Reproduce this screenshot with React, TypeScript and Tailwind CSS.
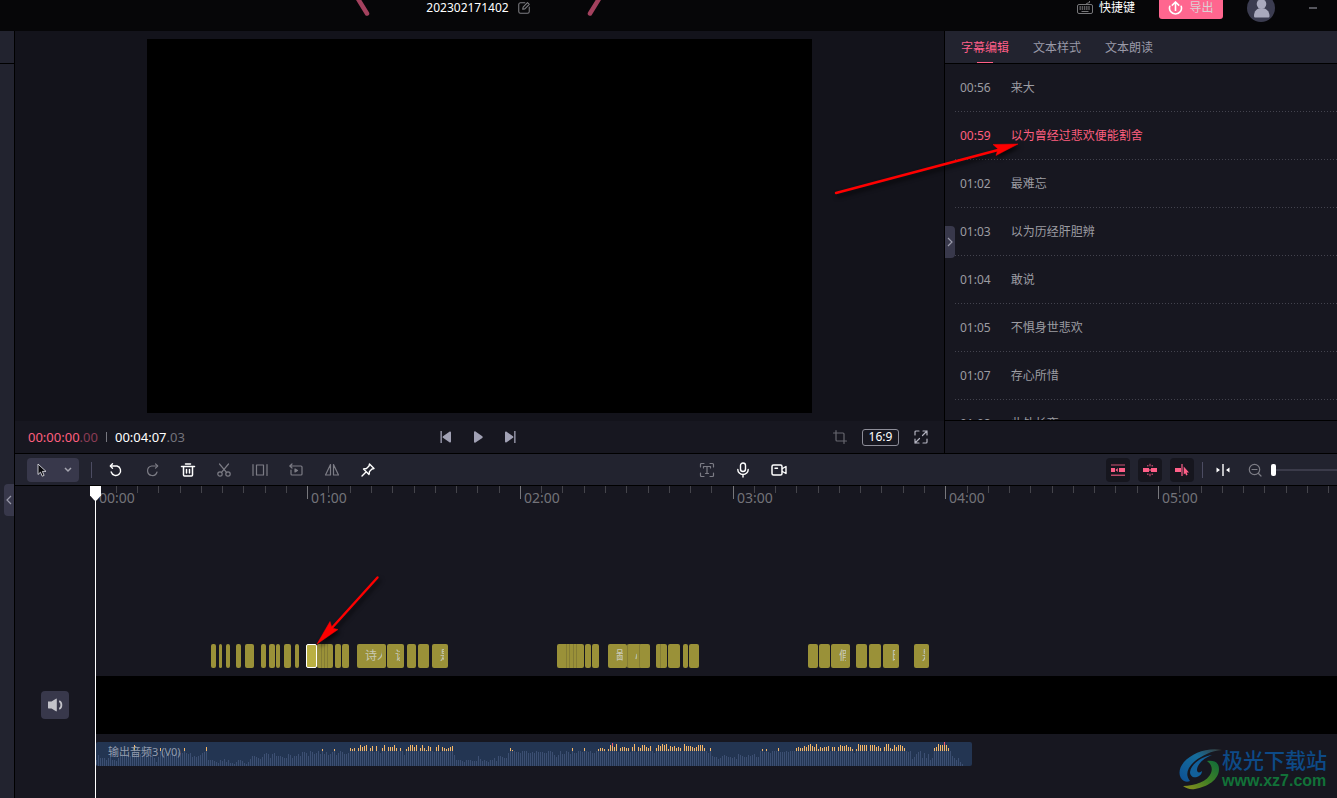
import { useState, type ReactNode } from "react";

interface Caption {
  time: string;
  text: string;
}

interface Clip {
  start: number;
  width: number;
  label?: string;
  selected?: boolean;
  seams?: number[];
}

const CAPTIONS: Caption[] = [
  { time: "00:56", text: "来大" },
  { time: "00:59", text: "以为曾经过悲欢便能割舍" },
  { time: "01:02", text: "最难忘" },
  { time: "01:03", text: "以为历经肝胆辨" },
  { time: "01:04", text: "敢说" },
  { time: "01:05", text: "不惧身世悲欢" },
  { time: "01:07", text: "存心所惜" },
  { time: "01:08", text: "此处长夜" },
];

const TABS = ["字幕编辑", "文本样式", "文本朗读"];

const MINUTE_WIDTH = 212.7;

// start and width in timeline pixels, counted from 00:00
const CLIPS: Clip[] = [
  { start: 116, width: 5 },
  { start: 124, width: 3 },
  { start: 131, width: 4 },
  { start: 141, width: 5 },
  { start: 150, width: 9 },
  { start: 166, width: 5 },
  { start: 174, width: 6 },
  { start: 181, width: 4 },
  { start: 189, width: 7 },
  { start: 200, width: 4 },
  { start: 211, width: 11, selected: true },
  { start: 222, width: 16, seams: [4, 7, 10] },
  { start: 240, width: 6 },
  { start: 247, width: 7 },
  { start: 262, width: 29, label: "诗人" },
  { start: 292, width: 17, label: "该" },
  { start: 312, width: 9 },
  { start: 323, width: 11 },
  { start: 337, width: 16, label: "是" },
  { start: 462, width: 27, seams: [9, 12, 16, 19] },
  { start: 490, width: 6 },
  { start: 497, width: 7 },
  { start: 513, width: 19, label: "鄙" },
  { start: 532, width: 14, label: "心", seams: [0] },
  { start: 544, width: 11, seams: [0] },
  { start: 561, width: 11, seams: [4] },
  { start: 573, width: 12 },
  { start: 588, width: 5 },
  { start: 594, width: 10 },
  { start: 713, width: 10 },
  { start: 724, width: 11 },
  { start: 736, width: 19, label: "假" },
  { start: 761, width: 11 },
  { start: 774, width: 12 },
  { start: 788, width: 16, label: "日" },
  { start: 819, width: 15, label: "是" },
];

// [first sample, heights], one sample every two pixels
const WAVE: [number, number[]][] = [
  [0, [6, 11, 8, 8, 8, 6, 8, 9, 6, 6, 5, 8, 11, 12, 10, 12, 11, 10, 12, 21, 13, 11, 12, 10, 13, 14, 12, 11]],
  [28, [10, 8, 4, 9, 18, 12, 14, 11, 10, 12, 13, 11, 13, 14, 13, 13, 18, 13, 12, 13, 9, 10, 9, 10, 11, 13, 14, 19]],
  [56, [6, 6, 6, 5, 4, 3, 6, 5, 7, 4, 6, 3, 3, 2, 4, 6, 6, 5, 3, 2, 4, 7]],
  [78, [10, 10, 9, 8, 7, 9, 12, 13, 12, 8, 12, 13, 10, 10, 10, 9, 8, 8, 12, 11, 8, 10, 10, 12, 10, 14, 14, 13]],
  [106, [10, 15, 14, 12, 13, 15, 12, 17, 12, 14, 11, 12, 14, 17, 11, 13, 15, 14, 12, 12, 13]],
  [127, [18, 17, 18, 15, 18, 21, 19, 20, 21, 15, 18, 20, 14, 20, 15, 13, 18, 21, 15, 19, 19, 19, 21, 18, 15]],
  [152, [18, 15, 11, 17, 19, 21, 21, 19, 21, 15, 18, 21, 18, 16, 20, 19, 15, 14, 19, 21, 14, 19, 18, 17, 18, 19, 20]],
  [178, [20, 11, 6, 6, 6, 5, 4, 6, 6, 6, 5, 5, 5, 10]],
  [192, [7, 5, 6, 5, 4, 6, 6, 8, 5, 10, 10, 9, 8, 8, 13]],
  [207, [18, 16, 15, 14, 14, 13, 15, 15, 15, 13, 13, 14, 13, 15, 14, 14, 14, 13, 13, 15, 15, 14, 11, 9, 11, 15]],
  [233, [12, 12, 15, 14, 12, 18, 13, 13, 15, 15, 14, 18, 15, 14, 15, 13, 13, 15]],
  [251, [17, 18, 18, 17, 14, 17, 21, 23, 19, 22, 14, 18, 19, 19, 18, 18, 14, 19]],
  [269, [22, 14, 19, 18, 21, 21, 19, 18, 20, 15, 13, 18, 21, 20, 22, 21, 22]],
  [286, [17, 20, 19, 20, 18, 19, 18, 15, 22, 20, 20, 20, 19, 18, 19, 21, 21, 21, 18, 15, 13]],
  [307, [18, 10, 9, 9, 7, 8, 10, 11, 10, 9, 9, 8, 9, 7, 12, 11, 10, 9, 9, 11, 10, 11, 12, 9, 9]],
  [332, [15, 17, 14, 17, 14, 13, 15, 15, 15, 18, 14, 14, 14, 15, 14, 15, 15, 15]],
  [350, [18, 19, 18, 18, 20, 19, 21, 22, 20, 19, 22, 17, 19, 18, 19, 19, 20, 15, 19, 19, 15, 19]],
  [372, [21, 20, 20, 21, 19, 19, 17, 13, 17, 22, 21, 21, 21, 21, 15, 21, 21, 21, 19, 20, 18, 14]],
  [394, [19, 22, 22, 18, 17, 21, 19, 21, 21, 20, 18, 15, 14, 15, 7, 9, 12, 14, 15, 8, 13, 8, 12, 6, 8]],
  [419, [18, 19, 22, 21, 21, 24, 21, 18, 15, 10, 8, 6, 8, 4, 2]],
];

function Waveform() {
  return (
    <svg className="block" width="876" height="24" shapeRendering="crispEdges" aria-hidden>
      {WAVE.map(([first, heights]) =>
        heights.map((h, n) => {
          const x = (first + n) * 2;
          return (
            <g key={x}>
              <rect x={x} y={24 - Math.min(h, 15)} width="1" height={Math.min(h, 15)} fill="#3c4f72" />
              {h > 15 && <rect x={x} y={24 - h} width="1" height={h - 15} fill="#f6b767" />}
              {h > 22 && <rect x={x} y={24 - h} width="1" height="3" fill="#f2566f" />}
            </g>
          );
        })
      )}
    </svg>
  );
}

function Icon({ children, size = 16 }: { children: ReactNode; size?: number }) {
  return (
    <svg
      width={size}
      height={size}
      viewBox="0 0 16 16"
      fill="none"
      stroke="currentColor"
      strokeWidth="1.2"
      strokeLinecap="round"
      strokeLinejoin="round"
      aria-hidden
    >
      {children}
    </svg>
  );
}

function ToolButton({ label, dim, children }: { label: string; dim?: boolean; children: ReactNode }) {
  return (
    <button
      type="button"
      aria-label={label}
      className={`flex size-6 items-center justify-center ${dim ? "text-[#7c7c85]" : "text-white"}`}
    >
      {children}
    </button>
  );
}

function SnapButton({ label, children }: { label: string; children: ReactNode }) {
  return (
    <button
      type="button"
      aria-label={label}
      className="flex size-6 items-center justify-center rounded bg-[#16161e] text-[#ff5f88]"
    >
      <svg width="16" height="16" viewBox="0 0 16 16" fill="currentColor" aria-hidden>
        {children}
      </svg>
    </button>
  );
}

function Header() {
  return (
    <header className="flex h-[31px] shrink-0 items-end overflow-hidden bg-[#060608]">
      <div className="flex h-[46px] min-w-0 flex-1 items-center justify-center gap-14 pl-3">
        <svg width="14" height="30" viewBox="0 0 14 30" aria-hidden>
          <path d="M-1 1 L11 20.500" stroke="#a3415e" strokeWidth="4.500" strokeLinecap="round" />
        </svg>
        <div className="flex items-center gap-2">
          <h1 className="text-xs leading-4 text-white">202302171402</h1>
          <button type="button" aria-label="重命名" className="text-[#7d7d82]">
            <Icon size={14}>
              <path d="M9 2H4a2 2 0 0 0-2 2v8a2 2 0 0 0 2 2h8a2 2 0 0 0 2-2V7" />
              <path d="M6.500 9.500 7 7l5-5.200 2 2L9 9z" />
            </Icon>
          </button>
        </div>
        <svg width="14" height="30" viewBox="0 0 14 30" aria-hidden>
          <path d="M15 1 L3 20.500" stroke="#a3415e" strokeWidth="4.500" strokeLinecap="round" />
        </svg>
      </div>
      <div className="flex h-[46px] w-98 shrink-0 items-center justify-end gap-6 pr-5">
        <button type="button" className="flex items-center gap-[6px] text-xs text-white">
          <svg width="16" height="14" viewBox="0 0 16 14" fill="none" stroke="#77777a" aria-hidden>
            <rect x="0.500" y="3.500" width="15" height="9" rx="1.500" />
            <path d="M9.500 3.500V2.500l3-1V0" />
            <path d="M2.500 6h11M2.500 8h11" strokeDasharray="1.400 0.800" strokeWidth="1.400" />
            <path d="M4.500 10.500h7" />
          </svg>
          快捷键
        </button>
        <button
          type="button"
          className="flex h-[22px] w-16 items-center justify-center gap-[6px] rounded-[3px] bg-[#ff668f] text-xs text-[#dccfd3]"
        >
          <svg width="15" height="15" viewBox="0 0 15 15" fill="none" stroke="#fff" strokeWidth="1.600" aria-hidden>
            <path d="M1.800 5.200a6 6 0 1 0 11.400 0" strokeLinecap="round" />
            <path d="M7.500 10V1.500M3.800 4.600 7.500 1l3.700 3.600" />
          </svg>
          导出
        </button>
        <button type="button" aria-label="用户" className="size-7">
          <svg width="28" height="28" viewBox="0 0 28 28" aria-hidden>
            <circle cx="14" cy="14" r="14" fill="#3b3c50" />
            <circle cx="14.500" cy="10" r="4.800" fill="#a9a9bd" />
            <path d="M7 22c0-5 3-8 7.500-8s8 3 8 8c0 1-.5 1.500-1.500 1.500H8.500C7.500 23.500 7 23 7 22z" fill="#a9a9bd" />
          </svg>
        </button>
        <button type="button" aria-label="最小化" className="ml-[10px] flex h-6 w-2 items-center">
          <span className="h-[2px] w-full bg-[#55555c]" />
        </button>
      </div>
    </header>
  );
}

function Preview() {
  return (
    <section className="flex min-w-0 flex-1 flex-col">
      <div className="flex justify-center bg-[#13131b] p-2">
        <div className="aspect-video h-[374px] bg-black" />
      </div>
      <div className="grid h-8 grid-cols-3 items-center bg-[#171720] pr-[15px] pl-[13px]">
        <div className="flex items-center text-[13px] leading-4">
          <span className="text-[#ff5f7f]">00:00:00</span>
          <span className="text-[#8b3c55]">.00</span>
          <span className="mx-2 h-[10px] w-px bg-[#77777f]" />
          <span className="text-white">00:04:07</span>
          <span className="text-[#73737b]">.03</span>
        </div>
        <div className="flex items-center justify-center gap-4 text-[#a1a1b4]">
          <button type="button" aria-label="上一帧">
            <svg className="block" width="16" height="16" viewBox="0 0 16 16" fill="currentColor" aria-hidden>
              <path d="M2.500 2h1.300v12H2.500zM13 3.500v9c0 1-.8 1.300-1.600.8L5 8.800c-.6-.5-.6-1 0-1.500l6.400-4.600c.8-.5 1.600-.2 1.600.8z" />
            </svg>
          </button>
          <button type="button" aria-label="播放">
            <svg className="block" width="16" height="16" viewBox="0 0 16 16" fill="currentColor" aria-hidden>
              <path d="M4 3.300v9.400c0 1 .8 1.300 1.500.8l6.800-4.600c.6-.5.6-1.200 0-1.700L5.500 2.500C4.800 2 4 2.300 4 3.300z" />
            </svg>
          </button>
          <button type="button" aria-label="下一帧">
            <svg className="block" width="16" height="16" viewBox="0 0 16 16" fill="currentColor" aria-hidden>
              <path d="M12.200 2h1.300v12h-1.300zM3 3.500v9c0 1 .8 1.300 1.600.8L11 8.800c.6-.5.6-1 0-1.500L4.600 2.700C3.800 2.200 3 2.500 3 3.500z" />
            </svg>
          </button>
        </div>
        <div className="flex items-center justify-end gap-[14px]">
          <button type="button" aria-label="裁剪" className="text-[#66666e]">
            <Icon>
              <path d="M1.500 4H11a1 1 0 0 1 1 1v9.500M4 1.500V11a1 1 0 0 0 1 1h9.500" />
            </Icon>
          </button>
          <button
            type="button"
            className="flex h-[17px] w-[37px] items-center justify-center rounded-[3px] border border-[#8d8d98] text-xs text-white"
          >
            16:9
          </button>
          <button type="button" aria-label="全屏" className="text-[#b3b3bf]">
            <Icon>
              <path d="M6 2H3a1 1 0 0 0-1 1v3M10 2h4v4M14 10v3a1 1 0 0 1-1 1h-3M2 10v4h4M14 2 9.500 6.500M2 14l4.500-4.500" />
            </Icon>
          </button>
        </div>
      </div>
    </section>
  );
}

function CaptionPanel() {
  const [tab, setTab] = useState(0);
  const [current, setCurrent] = useState(1);

  return (
    <aside className="relative flex w-[393px] shrink-0 flex-col border-l border-black bg-[#171720]">
      <nav className="flex h-[33px] shrink-0 gap-6 border-b border-black bg-[#22232f] px-4">
        {TABS.map((name, i) => (
          <button
            key={name}
            type="button"
            onClick={() => setTab(i)}
            className={`relative h-8 pt-px text-xs ${tab === i ? "text-[#ff5f88]" : "text-[#9a9aa8]"}`}
          >
            {name}
            {tab === i && <span className="absolute inset-x-4 bottom-0 h-px bg-[#ff5f88]" />}
          </button>
        ))}
      </nav>
      <ul className="h-[356px] overflow-hidden pl-[10px]">
        {CAPTIONS.map((c, i) => (
          <li key={c.time}>
            <button
              type="button"
              onClick={() => setCurrent(i)}
              className={`flex h-[47px] w-full items-center gap-5 pl-[5px] text-left text-xs ${
                current === i ? "text-[#ff5f7f]" : "text-[#9c9ca2]"
              }`}
            >
              <span>{c.time}</span>
              <span>{c.text}</span>
            </button>
            <div className="h-px bg-[repeating-linear-gradient(90deg,#43434e_0_1px,transparent_1px_3px)]" />
          </li>
        ))}
      </ul>
      <div className="flex-1 border-t border-black" />
      <button
        type="button"
        aria-label="收起面板"
        className="absolute top-[195px] left-0 flex h-8 w-[10px] items-center justify-center rounded-r bg-[#38384b] text-[#9a9aaa]"
      >
        <svg width="6" height="10" viewBox="0 0 6 10" fill="none" stroke="currentColor" strokeWidth="1.200" aria-hidden>
          <path d="M1 1l4 4-4 4" />
        </svg>
      </button>
    </aside>
  );
}

function Toolbar() {
  const [zoom, setZoom] = useState(0);

  return (
    <div className="flex h-8 shrink-0 items-center justify-between border-b border-black bg-[#22232f] pl-3">
      <div className="flex items-center gap-3">
        <button
          type="button"
          aria-label="选择工具"
          className="flex h-6 w-[52px] items-center justify-between rounded bg-[#38384b] px-[7px]"
        >
          <svg width="14" height="16" viewBox="0 0 14 16" aria-hidden>
            <path
              d="M4 2v10.500l2.500-2.300 1.700 4 1.900-.8-1.700-4H12z"
              fill="#08080c"
              stroke="#d6d6dc"
              strokeWidth="0.900"
            />
          </svg>
          <svg width="8" height="6" viewBox="0 0 8 6" fill="none" stroke="#a5a5b0" strokeWidth="1.500" aria-hidden>
            <path d="M1 1l3 3 3-3" />
          </svg>
        </button>
        <span className="h-4 w-px bg-[#4c4c62]" />
        <ToolButton label="撤销">
          <Icon>
            <path d="M3 4h6a4.800 4.800 0 1 1-5.800 6" strokeWidth="1.400" />
            <path d="M4.500 1.800 2.300 4l2.200 2.200" strokeWidth="1.400" />
          </Icon>
        </ToolButton>
        <ToolButton label="重做" dim>
          <Icon>
            <path d="M13 4H7.500a4.800 4.800 0 1 0 5.500 6" />
            <path d="M11.500 1.800 13.700 4l-2.200 2.200" />
          </Icon>
        </ToolButton>
        <ToolButton label="删除">
          <Icon>
            <path d="M1.500 4.500h13M5.500 2h5M3.500 4.500V13a1 1 0 0 0 1 1h7a1 1 0 0 0 1-1V4.500M6.500 7.500v3.500M9.500 7.500v3.500" strokeWidth="1.500" />
          </Icon>
        </ToolButton>
        <ToolButton label="分割" dim>
          <Icon>
            <circle cx="4" cy="12" r="2.200" />
            <circle cx="12" cy="12" r="2.200" />
            <path d="M3.500 2l7 8.400M12.500 2l-7 8.400" />
          </Icon>
        </ToolButton>
        <ToolButton label="截取" dim>
          <Icon>
            <path d="M1 2.500v11M15 2.500v11M4.500 3h7v10h-7z" />
          </Icon>
        </ToolButton>
        <ToolButton label="倒放" dim>
          <Icon>
            <path d="M2 4h11a1 1 0 0 1 1 1v7a1 1 0 0 1-1 1H4a1 1 0 0 1-1-1V8M4 2 1.800 4 4 6" />
            <path d="M7 7v3l2.500-1.500z" fill="currentColor" />
          </Icon>
        </ToolButton>
        <ToolButton label="镜像" dim>
          <Icon>
            <path d="M6.500 2.500V13H1.500zM9.500 2.500V13h5z" />
          </Icon>
        </ToolButton>
        <ToolButton label="标记">
          <Icon>
            <path d="M9.500 2 14 6.500l-2 .5-2.500 2.500-.5 3L3.500 7l3-.5L9 4zM6 10l-4 4" strokeWidth="1.400" />
          </Icon>
        </ToolButton>
      </div>

      <div className="flex items-center gap-3">
        <ToolButton label="文字识别" dim>
          <Icon>
            <path d="M1.500 5V2.500a1 1 0 0 1 1-1H5M11 1.500h2.500a1 1 0 0 1 1 1V5M14.500 11v2.500a1 1 0 0 1-1 1H11M5 14.500H2.500a1 1 0 0 1-1-1V11" />
            <path d="M4.500 6V4.500h7V6M8 4.500v7M6.500 11.500h3" />
          </Icon>
        </ToolButton>
        <ToolButton label="录音">
          <Icon>
            <rect x="5.500" y="1" width="5" height="8.500" rx="2.500" strokeWidth="1.400" />
            <path d="M2.800 7.500a5.200 5 0 0 0 10.400 0M8 12.500V15" strokeWidth="1.400" />
          </Icon>
        </ToolButton>
        <ToolButton label="录像">
          <Icon>
            <rect x="1" y="3" width="10" height="10" rx="1.500" strokeWidth="1.500" />
            <path d="M11.500 6.500 15 4.500v7l-3.500-2M4 6.200h2.500" strokeWidth="1.400" />
          </Icon>
        </ToolButton>
      </div>

      <div className="flex items-center gap-2">
        <SnapButton label="主轨磁吸">
          <path d="M1 2h14v2H1z" opacity="0.400" />
          <path d="M1 12.500h14V14H1z" opacity="0.700" />
          <path d="M1 6h4v4H1zM9 6h6v4H9zM7.800 6v4L5.500 8z" />
        </SnapButton>
        <SnapButton label="自动吸附">
          <path d="M1 6h6v4H1zM9 6h6v4H9z" />
          <path d="M7 7h2v2H7zM5 3h1.500v1.500H5zM9.500 3H11v1.500H9.500zM5 11.500h1.500V13H5zM9.500 11.500H11V13H9.500zM7.300 1.800h1.400v2.400H7.300zM7.300 11.800h1.400v2.400H7.300z" opacity="0.600" />
        </SnapButton>
        <SnapButton label="联动">
          <path d="M1 6h6v4H1z" />
          <path d="M7 2h2v12H7z" opacity="0.600" />
          <path d="M9.700 4.500v8l1.500-1.300 1 2.200 1.400-.6-1-2.200H15z" />
        </SnapButton>
        <span className="h-4 w-px bg-[#4c4c62]" />
        <ToolButton label="适应时间线">
          <svg width="16" height="16" viewBox="0 0 16 16" fill="currentColor" aria-hidden>
            <path d="M7 2h2v12H7z" opacity="0.700" />
            <path d="M1.500 5.500 5 8l-3.500 2.500zM14.500 5.500 11 8l3.500 2.500z" />
          </svg>
        </ToolButton>
        <div className="flex items-center gap-1">
          <ToolButton label="缩小" dim>
            <Icon>
              <circle cx="7.500" cy="7.500" r="5.200" />
              <path d="M5 7.500h5M11.500 11.500l2.500 2.500" />
            </Icon>
          </ToolButton>
          <input
            type="range"
            aria-label="时间线缩放"
            min={0}
            max={100}
            value={zoom}
            onChange={(e) => setZoom(Number(e.target.value))}
            className="h-3 w-[66px] appearance-none bg-[linear-gradient(#3b3b4a,#3b3b4a)] bg-[length:100%_2px] bg-center bg-no-repeat [&::-webkit-slider-thumb]:h-3 [&::-webkit-slider-thumb]:w-[5px] [&::-webkit-slider-thumb]:appearance-none [&::-webkit-slider-thumb]:rounded-[2px] [&::-webkit-slider-thumb]:bg-white"
          />
        </div>
      </div>
    </div>
  );
}

function Ruler() {
  const ticks = Array.from({ length: 60 }, (_, i) => i);

  return (
    <div className="relative h-[30px] overflow-hidden">
      {ticks.map((i) => {
        const left = Math.floor((i * MINUTE_WIDTH) / 10);
        if (i % 10 !== 0) {
          return <span key={i} className="absolute top-0 h-[7px] w-px bg-[#44444b]" style={{ left }} />;
        }
        return (
          <span
            key={i}
            className="absolute top-0 h-[13px] border-l border-[#77777c] pl-[3px] text-sm leading-6 text-[#737379]"
            style={{ left }}
          >
            {`0${i / 10}:00`}
          </span>
        );
      })}
    </div>
  );
}

function ClipBlock({ clip }: { clip: Clip }) {
  return (
    <div
      className={`absolute inset-y-0 overflow-hidden rounded-[2px] ${
        clip.selected ? "border border-white bg-[#bab043]" : "bg-[#9a9138]"
      }`}
      style={{ left: clip.start, width: clip.width }}
    >
      {clip.seams?.map((x) => (
        <span key={x} className="absolute inset-y-0 w-px bg-[#847c34]" style={{ left: x }} />
      ))}
      {clip.label && (
        <span className="mr-1 ml-2 block overflow-hidden text-xs leading-6 whitespace-nowrap text-[#c9c9b4]">
          {clip.label}
        </span>
      )}
    </div>
  );
}

function Timeline() {
  return (
    <div className="flex min-h-0 flex-1 overflow-hidden bg-[#171720]">
      <div className="flex w-20 shrink-0 justify-center pt-[205px]">
        <button
          type="button"
          aria-label="静音"
          className="flex size-7 items-center justify-center rounded bg-[#38384b] text-[#c3c3ca]"
        >
          <svg width="16" height="16" viewBox="0 0 16 16" fill="currentColor" aria-hidden>
            <path d="M1 4.500h3.500L9 1.700c.4-.2.800 0 .8.400v11.800c0 .4-.4.600-.8.400l-4.500-2.800h-3c-.3 0-.5-.2-.5-.5z" />
            <path d="M12.200 4.200c2.900 1 2.900 6.600 0 7.600" fill="none" stroke="currentColor" strokeWidth="1.800" />
          </svg>
        </button>
      </div>
      <div className="relative min-w-0 flex-1">
        <Ruler />
        <div className="relative mt-32 h-6 overflow-hidden">
          {CLIPS.map((clip) => (
            <ClipBlock key={clip.start} clip={clip} />
          ))}
        </div>
        <div className="mt-2 h-[58px] bg-black" />
        <div className="relative mt-2 ml-px h-6 w-[876px] overflow-hidden rounded-[2px] bg-[#233552]">
          <Waveform />
          <span className="absolute top-0 left-3 text-[11px] leading-5 text-[#929cad]">输出音频3 (V0)</span>
        </div>
        {/* Playhead */}
        <div className="absolute inset-y-0 left-0 w-px bg-white" />
        <svg className="absolute top-0 -left-[5px]" width="11" height="15" viewBox="0 0 11 15" aria-hidden>
          <path d="M0 0h11v9.500L6.500 14.500h-2L0 9.500z" fill="#fff" />
        </svg>
      </div>
    </div>
  );
}

function Arrows() {
  return (
    <svg
      className="pointer-events-none absolute inset-0 h-full w-full drop-shadow-[2px_3px_2px_rgba(0,0,0,0.7)]"
      fill="#ff0000"
      stroke="#ff0000"
      aria-hidden
    >
      <path d="M836 193 1000 149.500" strokeWidth="2.400" strokeLinecap="round" />
      <path d="M1018 144 993 144.500 998 149 996 155.500z" strokeWidth="0.500" />
      <path d="M377.500 577.500 330 630" strokeWidth="2.400" strokeLinecap="round" />
      <path d="M317 644 330 621.500 332 628 338 629.500z" strokeWidth="0.500" />
    </svg>
  );
}

function Watermark() {
  return (
    <div className="pointer-events-none absolute right-[10px] bottom-[7px] flex items-center">
      <svg width="44" height="44" viewBox="0 0 44 44" aria-hidden>
        <defs>
          <linearGradient id="swirlTop" x1="0" y1="1" x2="1" y2="0">
            <stop offset="0" stopColor="#0d4f94" />
            <stop offset="0.600" stopColor="#156d9c" />
            <stop offset="1" stopColor="#3b3b35" />
          </linearGradient>
          <linearGradient id="swirlBottom" x1="0" y1="1" x2="1" y2="0">
            <stop offset="0" stopColor="#8f8f1c" />
            <stop offset="0.500" stopColor="#3f7f25" />
            <stop offset="1" stopColor="#0f6b3a" />
          </linearGradient>
        </defs>
        <path d="M44 3C30 0 14 6 6 15 0 22 0 30 6 34c2 1 4 1 6 0C7 28 9 21 17 14 25 8 33 4 44 3z" fill="url(#swirlTop)" />
        <path d="M34 8C23 10 13 17 12 25c0 4 3 6 7 5 3-1 5-3 5-6-2 2-5 2-5-1 0-6 7-12 15-15z" fill="#12609a" />
        <path d="M29 14c8-1 12 2 12 8 0 11-12 18-24 20-5 1-9-1-12-3 12 0 25-5 28-13 2-5 0-9-4-12z" fill="url(#swirlBottom)" />
      </svg>
      <div className="flex flex-col">
        <span className="text-[21px] leading-6 font-medium text-[#0d4a87]">极光下载站</span>
        <span className="font-['Liberation_Sans'] text-base leading-[18px] font-bold text-[#127138]">www.xz7.com</span>
      </div>
    </div>
  );
}

export default function App() {
  return (
    <div className="relative flex h-screen flex-col overflow-hidden bg-[#171720] font-['Noto_Sans','Noto_Sans_CJK_SC',sans-serif]">
      <Header />
      <div className="flex min-h-0 flex-1">
        <div className="relative w-[15px] shrink-0 border-r border-black bg-[#22232f]">
          <div className="h-[33px] border-b border-black" />
          <button
            type="button"
            aria-label="展开面板"
            className="absolute top-[453px] right-0 flex h-8 w-[10px] items-center justify-center rounded-l bg-[#38384b] text-[#9a9aaa]"
          >
            <svg width="6" height="10" viewBox="0 0 6 10" fill="none" stroke="currentColor" strokeWidth="1.200" aria-hidden>
              <path d="M5 1 1 5l4 4" />
            </svg>
          </button>
        </div>
        <main className="flex min-w-0 flex-1 flex-col">
          <div className="flex shrink-0 border-b border-black">
            <Preview />
            <CaptionPanel />
          </div>
          <Toolbar />
          <Timeline />
        </main>
      </div>
      <Arrows />
      <Watermark />
    </div>
  );
}
